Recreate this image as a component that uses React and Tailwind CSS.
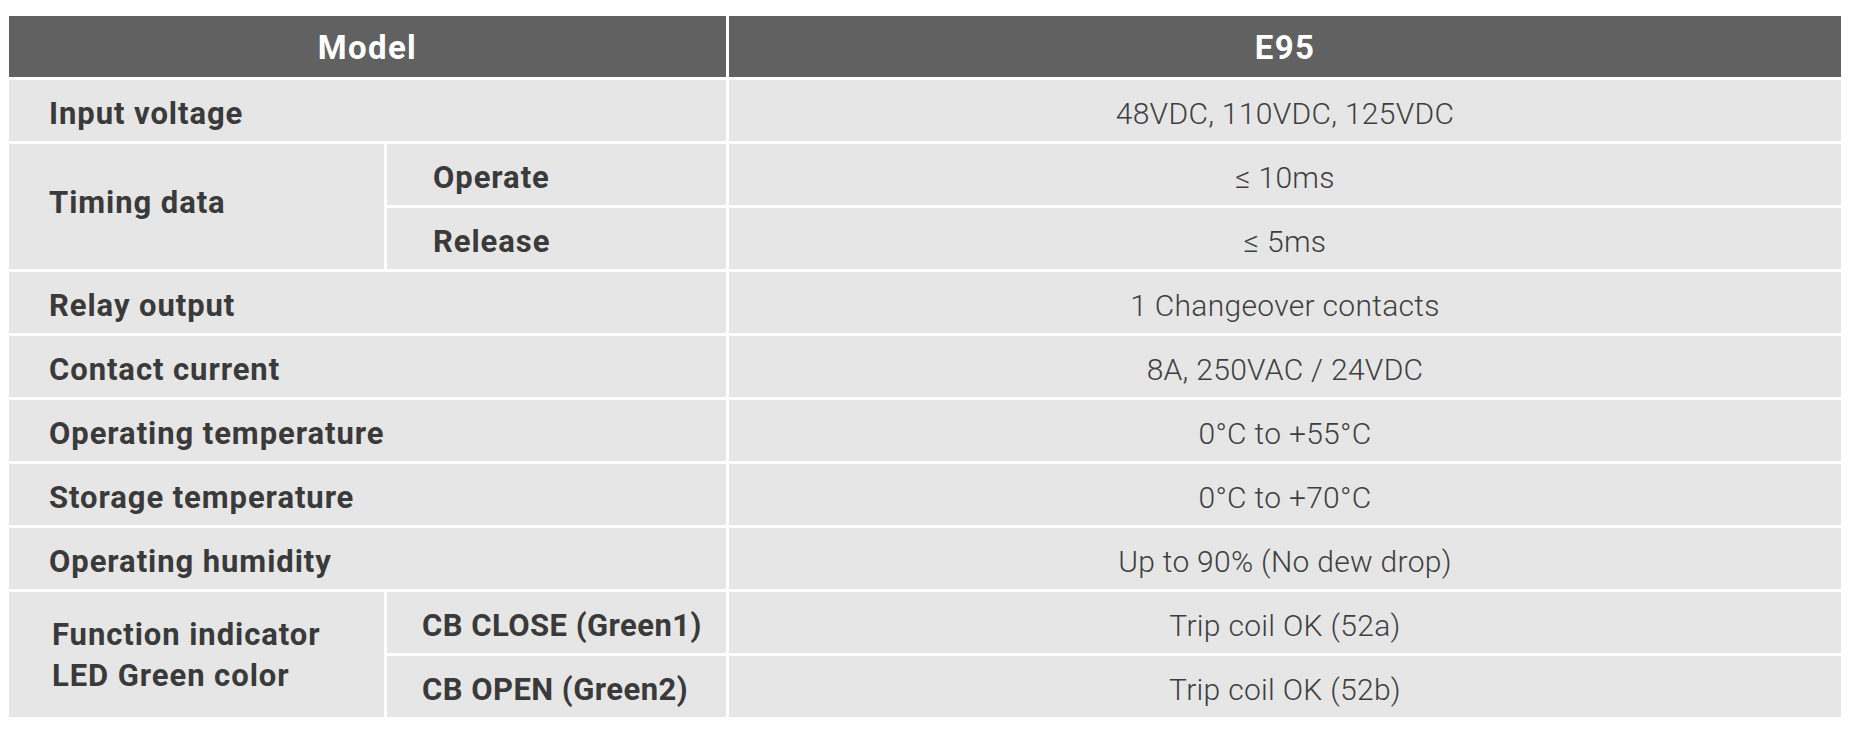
import React from "react";

const label = "bg-[#e6e6e6] flex items-center text-[31px] font-bold tracking-[0.03em] text-[#3a3a3a]";
const value = "bg-[#e6e6e6] flex items-center justify-center pt-[5px] text-[30px] font-light tracking-[0.01em] text-[#3f3f3f]";

const App = () => {
  return (
    <div className="w-[1860px] h-[732px] bg-white pt-4 pl-[9px] font-['Roboto',sans-serif]">
      <div className="grid grid-cols-[375px_339px_1112px] grid-rows-[61px_repeat(10,61px)] gap-[3px]">
        {/* Header */}
        <div className="col-span-2 bg-[#616161] flex items-center justify-center pt-[3px] text-[33px] font-bold tracking-[0.04em] text-white">
          Model
        </div>
        <div className="bg-[#616161] flex items-center justify-center pt-[3px] text-[33px] font-bold tracking-[0.04em] text-white">
          E95
        </div>

        <div className={`${label} col-span-2 pt-[7px] pl-[40px]`}>Input voltage</div>
        <div className={value}>48VDC, 110VDC, 125VDC</div>

        <div className={`${label} row-span-2 pb-[6px] pl-[40px]`}>Timing data</div>
        <div className={`${label} pt-[7px] pl-[46px]`}>Operate</div>
        <div className={value}>≤ 10ms</div>
        <div className={`${label} pt-[7px] pl-[46px]`}>Release</div>
        <div className={value}>≤ 5ms</div>

        <div className={`${label} col-span-2 pt-[7px] pl-[40px]`}>Relay output</div>
        <div className={value}>1 Changeover contacts</div>

        <div className={`${label} col-span-2 pt-[7px] pl-[40px]`}>Contact current</div>
        <div className={value}>8A, 250VAC / 24VDC</div>

        <div className={`${label} col-span-2 pt-[7px] pl-[40px]`}>Operating temperature</div>
        <div className={value}>0°C to +55°C</div>

        <div className={`${label} col-span-2 pt-[7px] pl-[40px]`}>Storage temperature</div>
        <div className={value}>0°C to +70°C</div>

        <div className={`${label} col-span-2 pt-[7px] pl-[40px]`}>Operating humidity</div>
        <div className={value}>Up to 90% (No dew drop)</div>

        <div className={`${label} row-span-2 pl-[43px] leading-[41px]`}>
          <span>
            Function indicator
            <br />
            LED Green color
          </span>
        </div>
        <div className={`${label} pt-[7px] pl-[35px] tracking-[0.015em]`}>CB CLOSE (Green1)</div>
        <div className={value}>Trip coil OK (52a)</div>
        <div className={`${label} pt-[7px] pl-[35px] tracking-[0.015em]`}>CB OPEN (Green2)</div>
        <div className={value}>Trip coil OK (52b)</div>
      </div>
    </div>
  );
};

export default App;
